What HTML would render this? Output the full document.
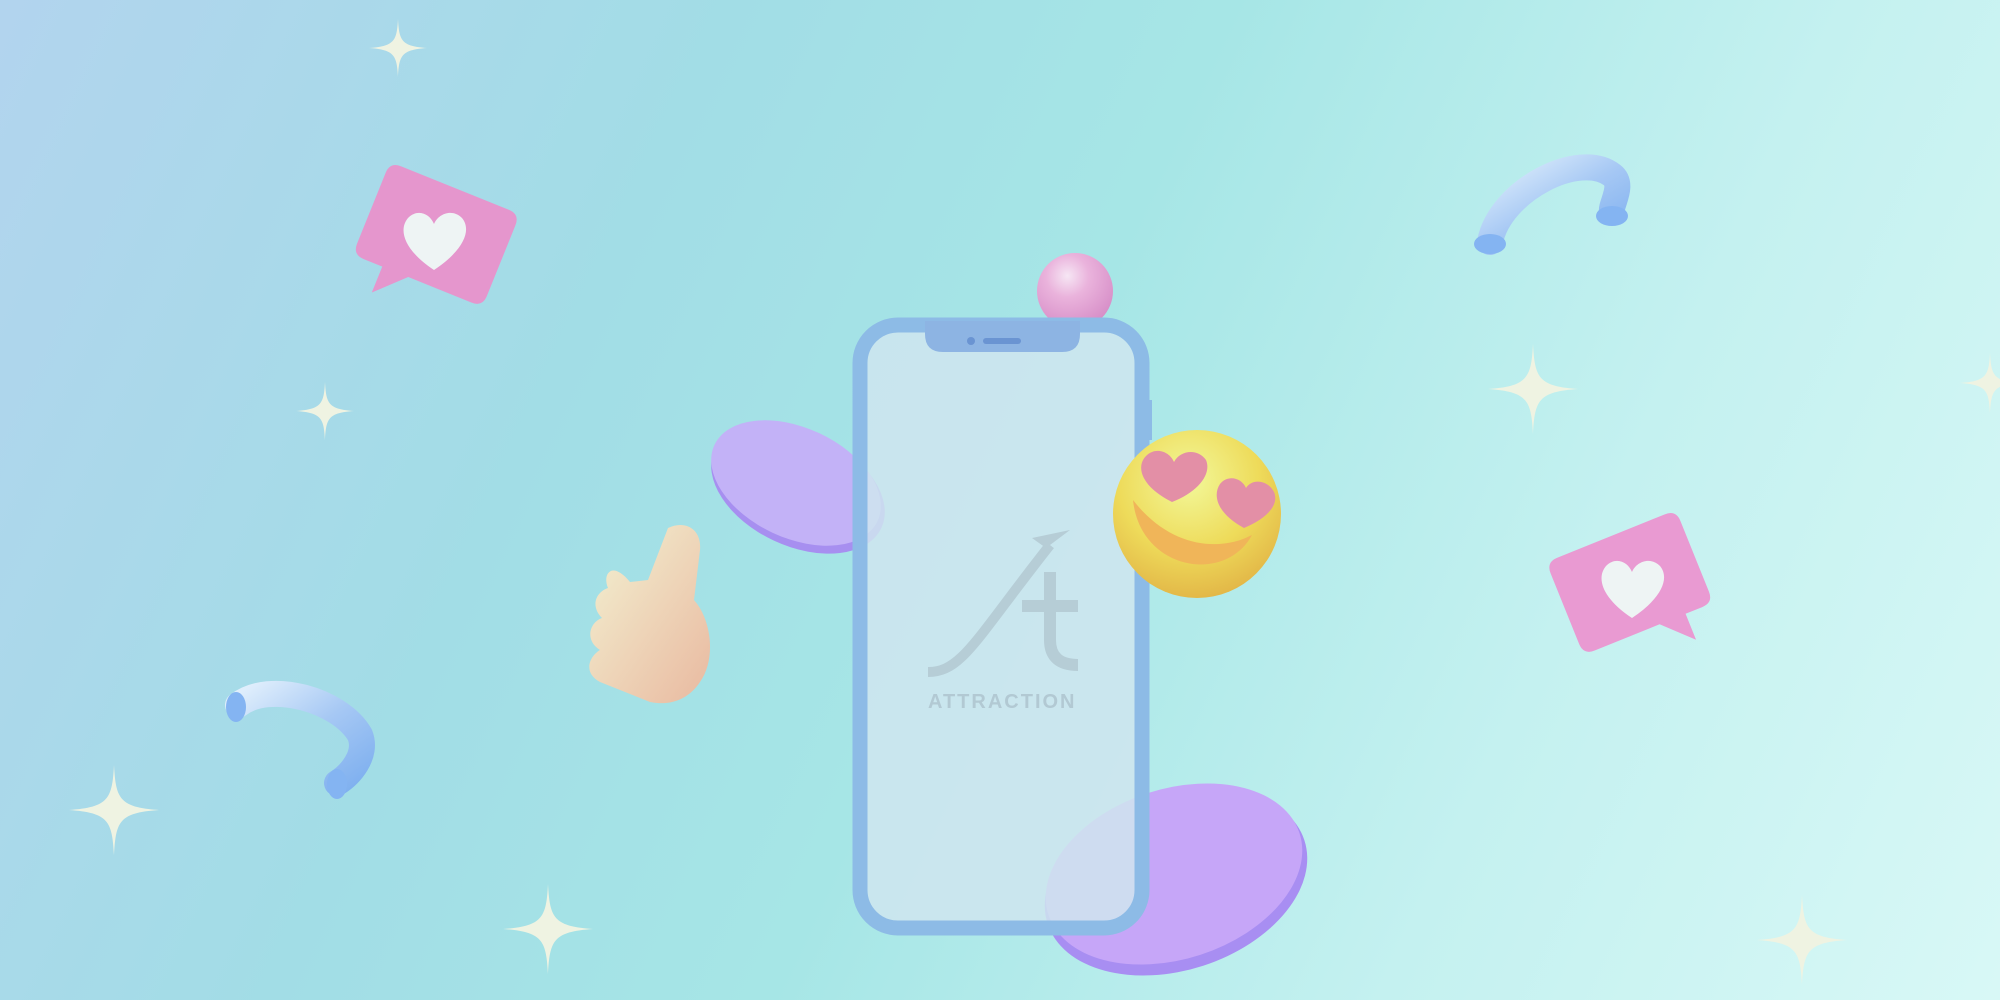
<!DOCTYPE html>
<html><head><meta charset="utf-8"><style>
html,body{margin:0;padding:0;width:2000px;height:1000px;overflow:hidden}
body{background:linear-gradient(115deg,#b2d4ee 0%,#a2dde6 30%,#a6e6e6 50%,#c4f1f0 75%,#d8f8f6 100%)}
svg{position:absolute;left:0;top:0}
</style></head><body>
<svg width="2000" height="1000" viewBox="0 0 2000 1000">
<defs>
<radialGradient id="pk" cx="40%" cy="30%" r="70%"><stop offset="0" stop-color="#f6e6f4"/><stop offset=".4" stop-color="#eab3dc"/><stop offset="1" stop-color="#d78fc8"/></radialGradient>
<radialGradient id="em" cx="45%" cy="30%" r="70%"><stop offset="0" stop-color="#f2f89a"/><stop offset=".6" stop-color="#eedb5a"/><stop offset="1" stop-color="#e3b848"/></radialGradient>
<linearGradient id="tube" x1="0" y1="0" x2="1" y2="1"><stop offset="0" stop-color="#dfeefc"/><stop offset=".5" stop-color="#a6c8f4"/><stop offset="1" stop-color="#7fb0ef"/></linearGradient>
<linearGradient id="hand" x1="0" y1="0" x2="1" y2="1"><stop offset="0" stop-color="#f3f2d2"/><stop offset="1" stop-color="#e9b9a0"/></linearGradient>
<path id="sp" d="M0,-1 C0.04,-0.25 0.12,-0.06 1,0 C0.12,0.06 0.04,0.25 0,1 C-0.04,0.25 -0.12,0.06 -1,0 C-0.12,-0.06 -0.04,-0.25 0,-1Z"/>
</defs>
<g fill="#eff3e2">
<use href="#sp" transform="translate(398,48) scale(29)"/>
<use href="#sp" transform="translate(325,411) scale(29)"/>
<use href="#sp" transform="translate(114,810) scale(45)"/>
<use href="#sp" transform="translate(548,929) scale(45)"/>
<use href="#sp" transform="translate(1533,389) scale(45)"/>
<use href="#sp" transform="translate(1990,383) scale(30)"/>
<use href="#sp" transform="translate(1802,940) scale(45)"/>
</g>
<!-- heart bubbles -->
<g transform="translate(434,240) rotate(22)">
<path d="M-70,-44 Q-70,-56 -58,-56 L58,-56 Q70,-56 70,-44 L70,32 Q70,44 58,44 L-10,44 L-38,72 L-38,44 L-58,44 Q-70,44 -70,32Z" fill="#e596cd"/>
<path d="M0,30 C-30,10 -36,-10 -26,-22 C-16,-32 -4,-26 0,-16 C4,-26 18,-32 28,-22 C38,-10 30,10 0,30Z" fill="#eef4f4" transform="rotate(-22)"/>
</g>
<g transform="translate(1632,588) rotate(-22)">
<path d="M-70,-44 Q-70,-56 -58,-56 L58,-56 Q70,-56 70,-44 L70,32 Q70,44 58,44 L40,44 L40,72 L12,44 L-58,44 Q-70,44 -70,32Z" fill="#e99ad2"/>
<path d="M0,30 C-30,10 -36,-10 -26,-22 C-16,-32 -4,-26 0,-16 C4,-26 18,-32 28,-22 C38,-10 30,10 0,30Z" fill="#eef4f4" transform="rotate(22)"/>
</g>
<!-- tubes -->
<path d="M1490,242 C1500,190 1580,150 1612,175 C1625,185 1610,205 1612,212" fill="none" stroke="url(#tube)" stroke-width="26" stroke-linecap="round"/>
<ellipse cx="1490" cy="244" rx="16" ry="10" fill="#84b4f2"/><ellipse cx="1612" cy="216" rx="16" ry="10" fill="#84b4f2"/>
<path d="M238,705 C270,680 340,700 360,735 C368,755 350,775 337,783" fill="none" stroke="url(#tube)" stroke-width="26" stroke-linecap="round"/>
<ellipse cx="236" cy="707" rx="10" ry="15" fill="#84b4f2"/><ellipse cx="337" cy="784" rx="10" ry="15" fill="#84b4f2"/>
<!-- thumb -->
<g fill="url(#hand)">
<path d="M668,528 C684,520 702,528 700,550 L694,600 C712,620 716,660 700,682 C688,700 670,706 650,702 L600,682 C582,672 590,656 600,650 C584,640 590,622 602,618 C590,606 596,592 608,588 C602,574 612,560 630,582 L648,580 Z"/>
</g>
<!-- purple discs -->
<ellipse cx="798" cy="489" rx="92" ry="57" fill="#a78ff0" transform="rotate(25 798 489)"/>
<ellipse cx="796" cy="483" rx="90" ry="55" fill="#c3b2f7" transform="rotate(25 796 483)"/>
<ellipse cx="1176" cy="882" rx="135" ry="88" fill="#a88ef2" transform="rotate(-18 1176 882)"/>
<ellipse cx="1174" cy="874" rx="132" ry="85" fill="#c6a6f8" transform="rotate(-18 1174 874)"/>
<!-- pink ball -->
<circle cx="1075" cy="291" r="38" fill="url(#pk)"/>
<!-- phone -->
<rect x="860" y="325" width="282" height="603" rx="38" fill="#cfe5ef" fill-opacity=".85" stroke="#8dbbe6" stroke-width="15"/>
<path d="M925,321 L1080,321 L1080,334 Q1080,352 1062,352 L943,352 Q925,352 925,334Z" fill="#8db4e3"/>
<circle cx="971" cy="341" r="4" fill="#6a94d2"/><rect x="983" y="338" width="38" height="6" rx="3" fill="#6a94d2"/>
<rect x="1148" y="400" width="4" height="40" fill="#8dbbe6"/>
<!-- logo -->
<path d="M928,672 C962,672 975,640 1050,545" fill="none" stroke="#b6cdd6" stroke-width="10"/>
<path d="M1070,530 L1032,538 L1046,548Z" fill="#b6cdd6"/>
<path d="M1050,572 L1050,640 Q1050,665 1078,665" fill="none" stroke="#b6cdd6" stroke-width="12"/>
<rect x="1022" y="600" width="56" height="12" fill="#b6cdd6"/>
<text x="928" y="708" font-family="Liberation Sans, sans-serif" font-weight="bold" font-size="20" letter-spacing="2" fill="#b2c9d3">ATTRACTION</text>
<!-- emoji -->
<circle cx="1197" cy="514" r="84" fill="url(#em)"/>
<path d="M1133,500 C1140,570 1225,585 1252,535 C1220,552 1170,548 1133,500Z" fill="#f0b559"/>
<path d="M1172,502 C1140,486 1136,466 1146,456 C1156,446 1170,452 1174,462 C1180,450 1198,448 1206,460 C1212,474 1198,492 1172,502Z" fill="#e38fa6"/>
<path d="M1244,528 C1218,514 1212,496 1220,484 C1228,474 1242,478 1246,488 C1252,478 1268,480 1274,492 C1280,506 1264,520 1244,528Z" fill="#e38fa6"/>
</svg>
</body></html>
